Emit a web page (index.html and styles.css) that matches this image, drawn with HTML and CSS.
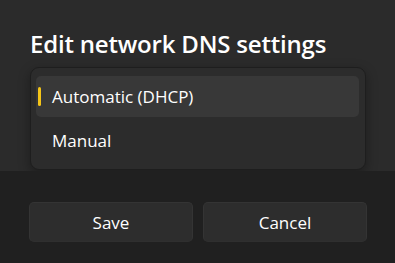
FILE: index.html
```html
<!DOCTYPE html>
<html>
<head>
<meta charset="utf-8">
<link rel="stylesheet" href="styles.css">
</head>
<body>
<div class="dialog">
  <div class="content">
    <div class="title">Edit network DNS settings</div>
    <div class="flyout">
      <div class="item selected"><span class="pill"></span>Automatic (DHCP)</div>
      <div class="item">Manual</div>
    </div>
  </div>
  <div class="footer">
    <button class="btn">Save</button>
    <button class="btn">Cancel</button>
  </div>
</div>
</body>
</html>
```
FILE: styles.css
```css
html, body {
  margin: 0;
  padding: 0;
  background: #202020;
}
body {
  width: 395px;
  height: 263px;
  overflow: hidden;
  font-family: "Open Sans", "Noto Sans", sans-serif;
  color: #ffffff;
}
.dialog {
  width: 395px;
  height: 263px;
  display: flex;
  flex-direction: column;
}
.content {
  background: #2b2b2b;
  height: 171px;
  box-sizing: border-box;
  padding: 28px 29px 0 30px;
}
.title {
  font-size: 24px;
  font-weight: 600;
  line-height: 32px;
  letter-spacing: -0.2px;
  height: 39px;
}
.flyout {
  width: 336px;
  height: 103px;
  box-sizing: border-box;
  background: #2c2c2c;
  border: 1px solid #1e1e1e;
  border-radius: 9px;
  padding: 8px 6px 8px 5px;
  display: flex;
  flex-direction: column;
  gap: 4px;
  box-shadow: 0 4px 12px rgba(0, 0, 0, 0.35);
}
.item {
  position: relative;
  height: 41px;
  box-sizing: border-box;
  border-radius: 5px;
  padding-left: 16px;
  display: flex;
  align-items: center;
  font-size: 17px;
  color: #ffffff;
}
.item.selected {
  background: #383838;
}
.pill {
  position: absolute;
  left: 1.5px;
  top: 11px;
  width: 3px;
  height: 19px;
  border-radius: 2px;
  background: #f5c518;
}
.footer {
  flex: 1;
  background: #202020;
  display: grid;
  grid-template-columns: 164px 164px;
  column-gap: 10px;
  padding: 31px 0 0 29px;
  align-items: start;
}
.btn {
  height: 40px;
  margin: 0;
  background: #2d2d2d;
  border: 1px solid #343434;
  border-bottom-color: #2f2f2f;
  border-radius: 5px;
  color: #ffffff;
  font-family: "Open Sans", "Noto Sans", sans-serif;
  font-size: 17px;
  padding: 0;
}
```
